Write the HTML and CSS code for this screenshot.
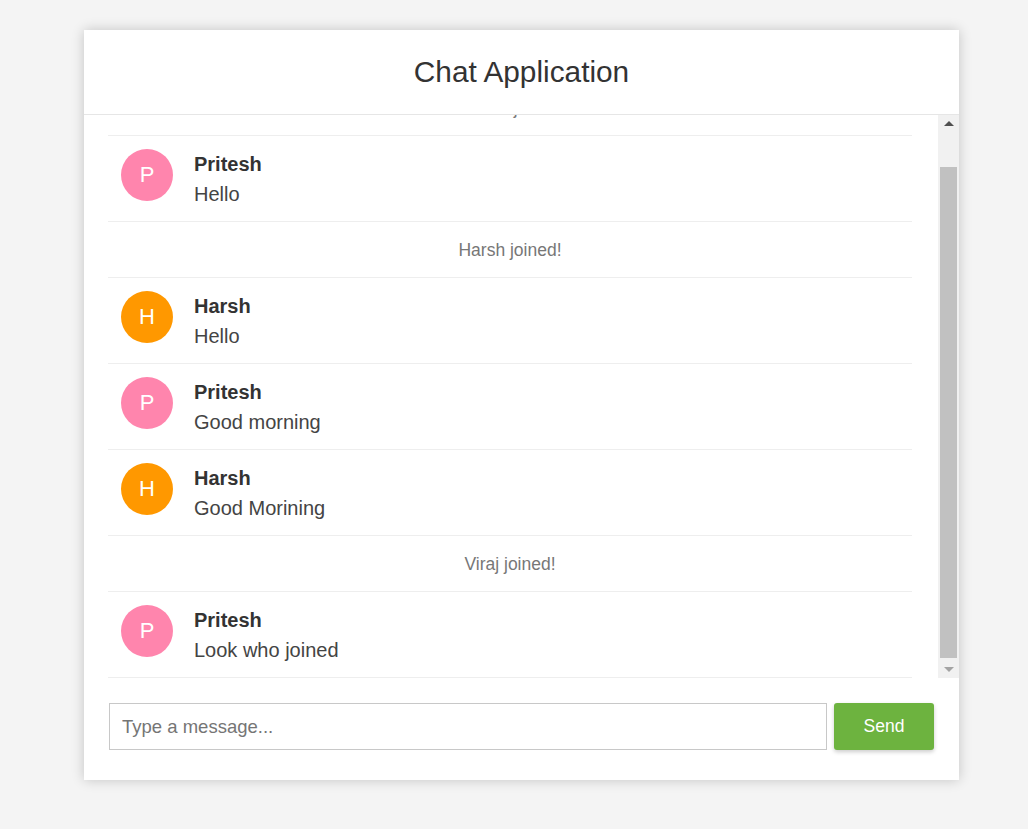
FILE: index.html
```html
<!DOCTYPE html>
<html lang="en">
<head>
<meta charset="utf-8">
<title>Chat Application</title>
<link rel="stylesheet" href="styles.css">
</head>
<body>
<div class="chat-card">
  <header class="chat-header">
    <h1 class="chat-title">Chat Application</h1>
  </header>
  <div class="chat-body">
    <ul class="message-list">
      <li class="item system">Pritesh joined!</li>
      <li class="item message">
        <div class="avatar pink">P</div>
        <div class="msg-text">
          <div class="msg-name">Pritesh</div>
          <div class="msg-content">Hello</div>
        </div>
      </li>
      <li class="item system">Harsh joined!</li>
      <li class="item message">
        <div class="avatar orange">H</div>
        <div class="msg-text">
          <div class="msg-name">Harsh</div>
          <div class="msg-content">Hello</div>
        </div>
      </li>
      <li class="item message">
        <div class="avatar pink">P</div>
        <div class="msg-text">
          <div class="msg-name">Pritesh</div>
          <div class="msg-content">Good morning</div>
        </div>
      </li>
      <li class="item message">
        <div class="avatar orange">H</div>
        <div class="msg-text">
          <div class="msg-name">Harsh</div>
          <div class="msg-content">Good Morining</div>
        </div>
      </li>
      <li class="item system">Viraj joined!</li>
      <li class="item message">
        <div class="avatar pink">P</div>
        <div class="msg-text">
          <div class="msg-name">Pritesh</div>
          <div class="msg-content">Look who joined</div>
        </div>
      </li>
    </ul>
    <div class="scrollbar" aria-hidden="true">
      <div class="sb-btn"><span class="arrow-up"></span></div>
      <div class="sb-track"><div class="sb-thumb"></div></div>
      <div class="sb-btn"><span class="arrow-down"></span></div>
    </div>
  </div>
  <form class="chat-form">
    <input class="chat-input" type="text" placeholder="Type a message...">
    <button class="send-btn" type="button">Send</button>
  </form>
</div>
</body>
</html>
```
FILE: styles.css
```css
* { box-sizing: border-box; }

html, body {
  margin: 0;
  padding: 0;
}

body {
  background: #f4f4f4;
  font-family: "Liberation Sans", Arial, Helvetica, sans-serif;
  padding-top: 30px;
  height: 829px;
  overflow: hidden;
}

.chat-card {
  width: 875px;
  height: 750px;
  margin-left: 84px;
  background: #fff;
  box-shadow: 0 0 12px rgba(0, 0, 0, 0.2);
  display: flex;
  flex-direction: column;
}

.chat-header {
  height: 85px;
  border-bottom: 1px solid #e6e6e6;
  display: flex;
  align-items: center;
  justify-content: center;
  flex: none;
}

.chat-title {
  margin: 0;
  font-size: 29.8px;
  font-weight: normal;
  color: #333;
}

.chat-body {
  height: 563px;
  flex: none;
  display: flex;
}

.message-list {
  list-style: none;
  margin: 0;
  padding: 0 26px 0 24px;
  flex: 1;
  overflow: hidden;
  display: flex;
  flex-direction: column;
  justify-content: flex-end;
}

.item {
  flex: none;
  border-bottom: 1px solid #eeeeee;
}

.system {
  padding: 18px 0 16px;
  line-height: 21px;
  font-size: 17.5px;
  color: #777;
  text-align: center;
}

.message {
  display: flex;
  align-items: flex-start;
  padding: 13px 12px 15px 13px;
}

.avatar {
  width: 52px;
  height: 52px;
  border-radius: 50%;
  color: #fff;
  font-size: 22px;
  display: flex;
  align-items: center;
  justify-content: center;
  margin-right: 21px;
  flex: none;
}

.pink { background: #ff85ad; }
.orange { background: #ff9800; }

.msg-text {
  margin-top: 3px;
}

.msg-name {
  font-size: 20px;
  line-height: 24px;
  font-weight: bold;
  color: #333;
}

.msg-content {
  margin-top: 6px;
  font-size: 20px;
  line-height: 24px;
  color: #444;
}

.scrollbar {
  width: 21px;
  flex: none;
  background: #f1f1f1;
  display: flex;
  flex-direction: column;
}

.sb-btn {
  height: 17px;
  flex: none;
  display: flex;
  align-items: center;
  justify-content: center;
}

.arrow-up {
  width: 0;
  height: 0;
  border-left: 5px solid transparent;
  border-right: 5px solid transparent;
  border-bottom: 5px solid #505050;
}

.arrow-down {
  width: 0;
  height: 0;
  border-left: 5px solid transparent;
  border-right: 5px solid transparent;
  border-top: 5px solid #a3a3a3;
}

.sb-track {
  flex: 1;
  display: flex;
  flex-direction: column;
  justify-content: flex-end;
  padding: 0 2px 3px;
}

.sb-thumb {
  height: 491px;
  background: #c1c1c1;
}

.chat-form {
  flex: 1;
  margin: 0;
  display: flex;
  align-items: flex-start;
  gap: 7px;
  padding: 25px 25px 30px;
}

.chat-input {
  flex: 1;
  height: 47px;
  border: 1px solid #c8c8c8;
  padding: 0 12px;
  font-family: inherit;
  font-size: 18.5px;
  color: #333;
  outline: none;
}

.chat-input::placeholder {
  color: #757575;
}

.send-btn {
  width: 100px;
  height: 47px;
  border: none;
  border-radius: 3px;
  background: #6db33f;
  color: #fff;
  font-family: inherit;
  font-size: 17.5px;
  box-shadow: 0 2px 4px rgba(0, 0, 0, 0.2);
  cursor: pointer;
}
```
